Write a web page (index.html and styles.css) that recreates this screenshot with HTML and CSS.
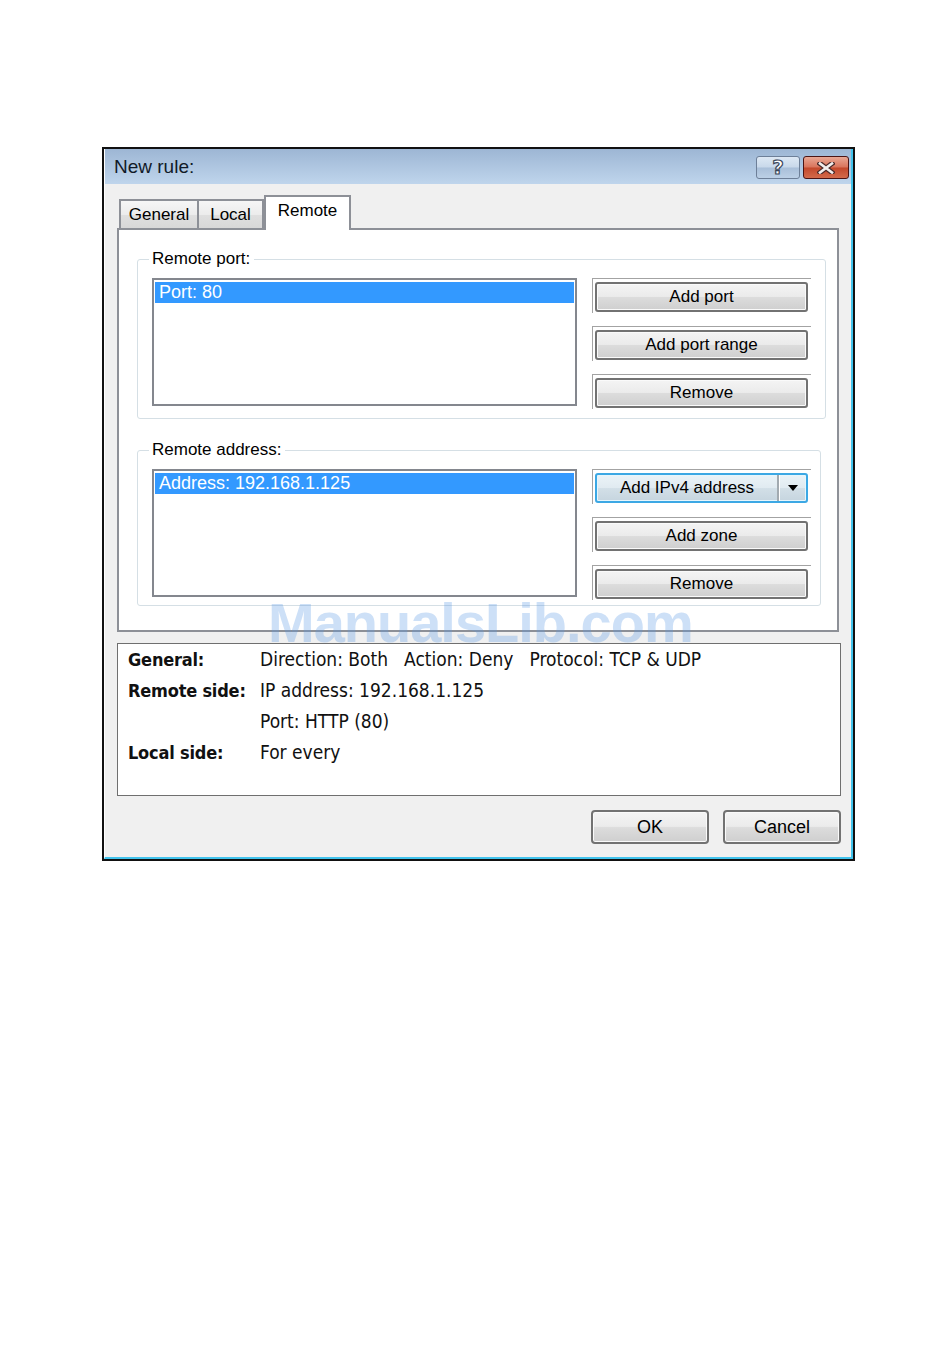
FILE: index.html
```html
<!DOCTYPE html>
<html>
<head>
	<meta charset="utf-8">
	<meta name="viewport" content="width=device-width, initial-scale=1">
	<title>New rule</title>
	<link rel="stylesheet" href="styles.css">
</head>
<body>

<div class="ventana">
	<div class="marco">

		<div class="titulo">
			<span class="tituloTxt">New rule:</span>
			<div class="tituloBtns">
				<button class="btnAyuda">?</button>
				<button class="btnCerrar">
					<svg width="18" height="12" viewBox="0 0 18 12">
						<path d="M3 1.5 L15 10.5 M15 1.5 L3 10.5" stroke="#4a2a2a" stroke-width="5" stroke-linecap="square"/>
						<path d="M3 1.5 L15 10.5 M15 1.5 L3 10.5" stroke="#f2eeee" stroke-width="2.6" stroke-linecap="square"/>
					</svg>
				</button>
			</div>
		</div>

		<div class="cuerpo">
			<div class="pestanas">
				<div class="pestana pGeneral">General</div>
				<div class="pestana pLocal">Local</div>
				<div class="pestana pRemote activa">Remote</div>
			</div>

			<div class="panel">
				<fieldset class="grupo grupo1">
					<legend>Remote port:</legend>
					<div class="grupoFila">
						<div class="lista">
							<div class="item sel">Port: 80</div>
						</div>
						<div class="botones">
							<div class="hueco"><button class="btn">Add port</button></div>
							<div class="hueco"><button class="btn">Add port range</button></div>
							<div class="hueco"><button class="btn">Remove</button></div>
						</div>
					</div>
				</fieldset>

				<fieldset class="grupo grupo2">
					<legend>Remote address:</legend>
					<div class="grupoFila">
						<div class="lista">
							<div class="item sel">Address: 192.168.1.125</div>
						</div>
						<div class="botones">
							<div class="hueco">
								<button class="btn split">
									<span class="splitTxt">Add IPv4 address</span>
									<span class="splitFlecha"><i class="triangulo"></i></span>
								</button>
							</div>
							<div class="hueco"><button class="btn">Add zone</button></div>
							<div class="hueco"><button class="btn">Remove</button></div>
						</div>
					</div>
				</fieldset>
			</div>

			<div class="resumen">
				<b>General:</b>
				<div class="valores">
					<span>Direction: Both</span>
					<span>Action: Deny</span>
					<span>Protocol: TCP &amp; UDP</span>
				</div>
				<b>Remote side:</b>
				<span>IP address: 192.168.1.125</span>
				<span></span>
				<span>Port: HTTP (80)</span>
				<b>Local side:</b>
				<span>For every</span>
			</div>

			<div class="pie">
				<button class="btn btnPie">OK</button>
				<button class="btn btnPie">Cancel</button>
			</div>
		</div>

	</div>
	<div class="marca">ManualsLib.com</div>
</div>

</body>
</html>
```

FILE: styles.css
```css
*,*:after,*:before{box-sizing: border-box;}
body{
	margin: 0;
	background: #fff;
	font-family: "Liberation Sans", Arial, sans-serif;
	font-size: 17px;
	color: #000;
}
button{font-family: inherit; font-size: inherit; color: inherit; padding: 0; margin: 0; cursor: pointer;}

.ventana{position: relative; width: 753px; margin: 147px 0 0 102px; border: 2px solid #111;}
.marco{
	background: #f0f0f0;
	border-left: 1px solid #fff;
	border-right: 2px solid #41c3ec;
	border-bottom: 2px solid #41c3ec;
}

/* barra de titulo */
.titulo{
	height: 35px;
	display: flex;
	align-items: center;
	justify-content: space-between;
	padding: 0 2px 0 9px;
	background: linear-gradient(#9db6d4, #bfd5ec);
}
.tituloTxt{font-size: 19px; color: #111a28;}
.tituloBtns{display: flex; gap: 3px; margin-top: 2px;}
.btnAyuda{
	width: 44px;
	height: 23px;
	border: 1px solid #6d7f98;
	border-radius: 3px;
	background: linear-gradient(#dde8f4 0%, #c8d8ea 48%, #a9bfd9 52%, #bcd0e6 100%);
	font-family: "DejaVu Sans", sans-serif;
	font-weight: bold;
	font-size: 20px;
	line-height: 21px;
	color: #fff;
	-webkit-text-stroke: 1.2px #3b475a;
}
.btnCerrar{
	width: 46px;
	height: 23px;
	border: 1px solid #4b1414;
	border-radius: 3px;
	background: linear-gradient(#e9a794 0%, #d9745c 48%, #c3482c 52%, #d36a4b 100%);
	display: flex;
	align-items: center;
	justify-content: center;
}

.cuerpo{padding: 11px 12px 13px 12px;}

/* pestanas */
.pestanas{display: flex; align-items: flex-end; height: 33px; padding-left: 2px;}
.pestana{
	height: 29px;
	border: 2px solid #8d9097;
	border-bottom: 0;
	background: linear-gradient(#f6f6f6 0%, #ececec 50%, #dfdfdf 52%, #d8d8d8 100%);
	text-align: center;
	line-height: 27px;
}
.pGeneral{width: 80px;}
.pLocal{width: 65px; border-left: 0;}
.pRemote{width: 87px;}
.pestana.activa{
	height: 35px;
	line-height: 28px;
	background: #fff;
	margin-bottom: -2px;
	position: relative;
	z-index: 1;
}

.panel{background: #fff; border: 2px solid #8d9097; padding: 19px 11px 24px 18px;}

.grupo{
	margin: 0;
	border: 1px solid #d5dfe5;
	border-radius: 3px;
	padding: 9px 14px 9px 14px;
}
.grupo legend{font-size: 17px; line-height: 20px; padding: 0 4px 0 3px; margin-left: -3px;}
.grupo2{margin: 21px 5px 0 0; padding-right: 9px; padding-bottom: 5px;}
.grupoFila{display: flex; gap: 15px; align-items: flex-start;}

.lista{
	width: 425px;
	height: 128px;
	border: 2px solid #84878e;
	background: #fff;
	padding: 2px 1px;
}
.item{height: 21px; line-height: 21px; padding-left: 4px; font-size: 18px;}
.item.sel{background: #3399ff; color: #fff;}

.botones{width: 219px; display: flex; flex-direction: column; gap: 13px;}
.hueco{border-top: 1px solid #a3a3a3; border-left: 1px solid #a3a3a3; padding: 3px 3px 1px 2px;}

.btn{
	display: block;
	width: 213px;
	height: 30px;
	border: 2px solid #727272;
	border-radius: 3px;
	background: linear-gradient(#f4f4f4 0%, #ebebeb 48%, #dcdcdc 52%, #cfcfcf 100%);
	box-shadow: inset 0 0 0 1px #fafafa;
	line-height: 26px;
	text-align: center;
}
.btn.split{
	display: flex;
	border-color: #3ca8e4;
	background: linear-gradient(#ebf3f7 0%, #e1ebf1 48%, #d2dfe7 52%, #c6d5df 100%);
	box-shadow: inset 0 0 0 1px #e6f6fd;
}
.splitTxt{flex: 1;}
.splitFlecha{
	width: 29px;
	border-left: 2px solid #a2aab0;
	box-shadow: inset 1px 0 0 #fff;
	display: flex;
	align-items: center;
	justify-content: center;
	padding-left: 1px;
}
.triangulo{
	width: 0;
	height: 0;
	border-top: 6px solid #000;
	border-left: 5px solid transparent;
	border-right: 5px solid transparent;
}

/* resumen */
.resumen{
	margin: 11px -2px 0 0;
	height: 153px;
	background: #fff;
	border: 1px solid #6f6f6f;
	padding: 0 10px;
	display: grid;
	grid-template-columns: 132px auto;
	align-content: start;
	line-height: 31px;
	font-family: "DejaVu Sans Condensed", "DejaVu Sans", sans-serif;
	font-stretch: condensed;
	font-size: 19px;
	color: #111;
}
.resumen b{font-size: 18px; letter-spacing: -0.2px;}
.valores{display: flex; gap: 16px;}

.pie{display: flex; justify-content: flex-end; gap: 14px; margin: 14px -2px 0 0;}
.btnPie{width: 118px; height: 34px; line-height: 30px; border-radius: 4px; font-size: 18px;}

/* marca de agua */
.marca{
	position: absolute;
	left: 164px;
	top: 454px;
	font-family: "Liberation Sans", Arial, sans-serif;
	font-weight: bold;
	font-size: 56px;
	line-height: 40px;
	letter-spacing: -1px;
	color: rgba(88, 152, 228, 0.3);
	pointer-events: none;
	z-index: 2;
}
```
